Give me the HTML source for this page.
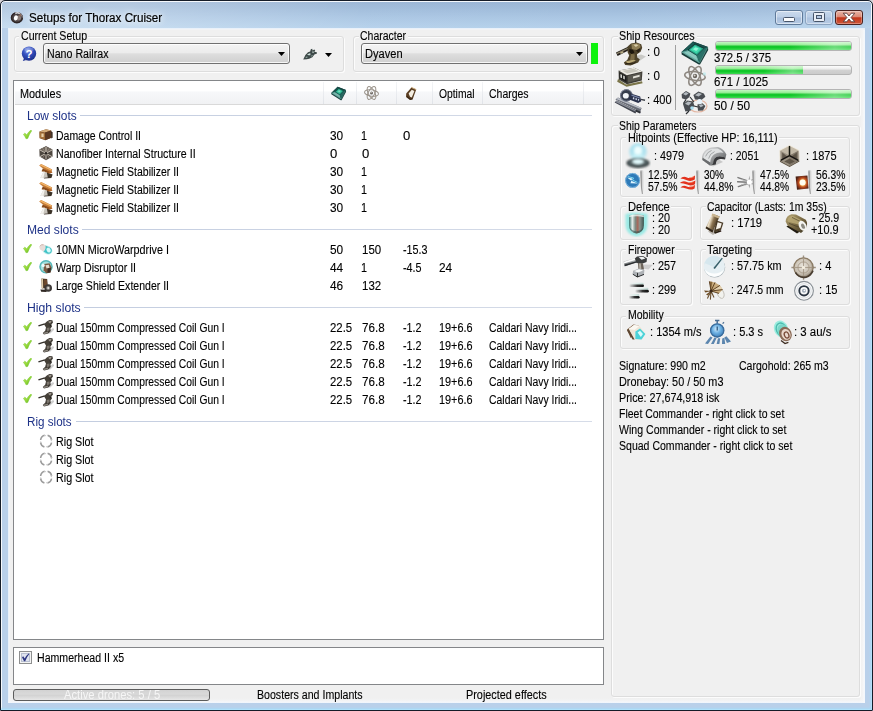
<!DOCTYPE html><html><head><meta charset="utf-8"><title>Setups for Thorax Cruiser</title><style>
html,body{margin:0;padding:0;}
body{width:873px;height:711px;overflow:hidden;background:#d8d4d8;font-family:"Liberation Sans",sans-serif;font-size:12px;line-height:14px;color:#000;position:relative;}
div,span,svg{position:absolute;box-sizing:border-box;}
.t{white-space:pre;transform-origin:0 0;-webkit-text-stroke:0.12px currentColor;}
.win{left:0;top:0;width:873px;height:711px;border:1px solid #151c28;border-radius:5px 5px 1px 1px;background:#b9d0ea;box-shadow:inset 0 0 0 1px rgba(255,255,255,.85);}
.tbar{left:2px;top:2px;width:869px;height:26px;background:linear-gradient(90deg,rgba(255,255,255,.25) 0,rgba(255,255,255,.25) 14%,rgba(255,255,255,.03) 42%,rgba(255,255,255,0) 70%,rgba(255,255,255,.08) 100%),linear-gradient(180deg,#9ab5d5 0,#9fbbda 6px,#aac6e3 15px,#b5d1eb 26px);border-radius:3px 3px 0 0;}
.winb{left:1px;top:707px;width:871px;height:3px;background:linear-gradient(180deg,rgba(160,220,250,0),#a2dcfa);}
.winr{left:869px;top:30px;width:3px;height:680px;background:linear-gradient(90deg,rgba(160,220,250,0),#a6daf8);}
.client{left:8px;top:28px;width:857px;height:675px;background:#f0f0f0;box-shadow:inset 0 0 0 1px #e9f1fa,inset 0 0 0 2px #f2f3f5;}
.gb{border:1px solid #dddddd;border-radius:3px;box-shadow:inset 1px 1px 0 #fcfcfc,1px 1px 0 #fcfcfc;}
.lab{background:#f0f0f0;}
.combo{border:1px solid #707070;border-radius:3px;background:linear-gradient(180deg,#f4f4f4 0,#ececec 45%,#dedede 52%,#cfcfcf 100%);box-shadow:inset 0 0 0 1px rgba(255,255,255,.8);}
.list{border:1px solid #848689;background:#fff;}
.hdr{left:1px;top:1px;height:23px;right:1px;background:linear-gradient(180deg,#fff 0,#fff 42%,#f7f8fa 44%,#f1f2f4 100%);border-bottom:1px solid #d9d9d9;}
.hsep{top:1px;width:1px;height:22px;background:linear-gradient(180deg,#f4f5f7,#e0e3e8);}
.gl{height:1px;background:linear-gradient(90deg,#c3cde0,#d6dce8);}
.pb{border:1px solid #b4b4b4;border-radius:3px;background:linear-gradient(180deg,#fdfdfd 0,#ececec 40%,#d2d2d2 50%,#cbcbcb 100%);overflow:hidden;}
.pf{left:0;top:0;height:100%;background:linear-gradient(90deg,rgba(255,255,255,0) 0,rgba(255,255,255,0) 55%,rgba(255,255,255,.38) 88%,rgba(255,255,255,.25) 100%),linear-gradient(180deg,#c4f6c4 0,#8deb8d 38%,#14c62c 50%,#12c82a 70%,#3edb52 100%);}
</style></head><body>
<svg width="0" height="0" style="left:0;top:0"><defs>
<filter id="b3" x="-20%" y="-20%" width="140%" height="140%"><feGaussianBlur stdDeviation=".35"/></filter>
<filter id="b5" x="-20%" y="-20%" width="140%" height="140%"><feGaussianBlur stdDeviation=".55"/></filter>
<filter id="b8" x="-30%" y="-30%" width="160%" height="160%"><feGaussianBlur stdDeviation=".9"/></filter>
<filter id="b15" x="-40%" y="-40%" width="180%" height="180%"><feGaussianBlur stdDeviation="1.6"/></filter>
<linearGradient id="chk" x1="0" y1="0" x2="1" y2="1"><stop offset="0" stop-color="#bdec62"/><stop offset=".55" stop-color="#92d636"/><stop offset="1" stop-color="#4fa81e"/></linearGradient>
<linearGradient id="gg" x1="0" x2="1"><stop offset="0" stop-color="#8c8c8c"/><stop offset=".45" stop-color="#cfcfcf"/><stop offset="1" stop-color="#f4f4f4"/></linearGradient>
<radialGradient id="hi" cx="42%" cy="28%" r="75%"><stop offset="0" stop-color="#8aa2ec"/><stop offset=".45" stop-color="#3450c0"/><stop offset="1" stop-color="#1b2c86"/></radialGradient>
<radialGradient id="ex" cx="55%" cy="50%" r="55%"><stop offset="0" stop-color="#fffbe0"/><stop offset=".3" stop-color="#ffc860"/><stop offset=".6" stop-color="#b8481c"/><stop offset="1" stop-color="#4a2016"/></radialGradient>
<radialGradient id="sh" cx="50%" cy="40%" r="60%"><stop offset="0" stop-color="#e6fdff"/><stop offset=".55" stop-color="#a9e0ee"/><stop offset="1" stop-color="#a9e0ee" stop-opacity="0"/></radialGradient>
<linearGradient id="df" x1="0" x2="1"><stop offset="0" stop-color="#2f6e68"/><stop offset=".22" stop-color="#e6eeec"/><stop offset=".42" stop-color="#7c8c84"/><stop offset=".58" stop-color="#a8685a"/><stop offset=".72" stop-color="#8a948e"/><stop offset="1" stop-color="#3c5650"/></linearGradient>
<linearGradient id="arm" x1="0" y1="0" x2="1" y2="1"><stop offset="0" stop-color="#e8e8e8"/><stop offset=".5" stop-color="#9a9c9e"/><stop offset="1" stop-color="#4a4c4e"/></linearGradient>
<linearGradient id="slv" x1="0" y1="0" x2="0" y2="1"><stop offset="0" stop-color="#f2f4f4"/><stop offset=".5" stop-color="#9ea2a4"/><stop offset="1" stop-color="#4a4e50"/></linearGradient>
<linearGradient id="brs" x1="0" y1="0" x2="1" y2="1"><stop offset="0" stop-color="#b8a878"/><stop offset=".5" stop-color="#7a6a44"/><stop offset="1" stop-color="#3a3220"/></linearGradient>
<radialGradient id="mt" cx="45%" cy="42%" r="58%"><stop offset="0" stop-color="#e8e3da"/><stop offset=".7" stop-color="#c9c0b2"/><stop offset="1" stop-color="#8e8374"/></radialGradient>
<radialGradient id="sw" cx="45%" cy="40%" r="60%"><stop offset="0" stop-color="#d2ecfc"/><stop offset=".5" stop-color="#6cb0e2"/><stop offset="1" stop-color="#3c7ab4"/></radialGradient>
<linearGradient id="cpu" x1="0" y1="0" x2="1" y2="1"><stop offset="0" stop-color="#2a8f88"/><stop offset=".5" stop-color="#6ee8dc"/><stop offset="1" stop-color="#1f7a74"/></linearGradient>
</defs></svg>
<div class="win"></div><div class="tbar"></div><div class="winb"></div><div class="winr"></div>
<div class="" style="left:775px;top:10px;width:28px;height:15px;border:1px solid #5f7a9a;border-radius:3px;background:linear-gradient(180deg,#cbdaec 0,#bccfe7 48%,#a9bfdc 52%,#b4c9e3 100%);box-shadow:inset 0 0 0 1px rgba(255,255,255,.5);"></div><div class="" style="left:783px;top:17px;width:12px;height:5px;border:1px solid #47556a;border-radius:1.5px;background:#fbfcfe;"></div><div class="" style="left:805px;top:10px;width:28px;height:15px;border:1px solid #8ba3c0;border-radius:3px;background:linear-gradient(180deg,#c4d5ea 0,#b9cde6 48%,#adc3df 52%,#b6cae4 100%);box-shadow:inset 0 0 0 1px rgba(255,255,255,.4);"></div><div class="" style="left:813px;top:12px;width:12px;height:10px;border:1px solid #47556a;border-radius:1.5px;background:#e9eef6;"></div><div class="" style="left:816px;top:15px;width:6px;height:4px;border:1px solid #47556a;background:#b4c8e2;"></div><div class="" style="left:835px;top:10px;width:28px;height:15px;border:1px solid #4a2220;border-radius:3px;background:linear-gradient(180deg,#e9b5a7 0,#dc8a77 45%,#c3361b 52%,#cf573a 100%);box-shadow:inset 0 0 0 1px rgba(255,255,255,.3);"></div><svg class="i" style="left:842px;top:12px" width="14" height="11" viewBox="0 0 14 11"><path d="M1.2 1.2h3.6L7 4l2.2-2.8h3.6L9.1 5.5l3.7 4.3H9.2L7 7 4.8 9.8H1.2l3.7-4.3z" fill="#fff" stroke="#5a3c3c" stroke-width="0.9" stroke-linejoin="round"/></svg>
<svg class="i" style="left:10px;top:9.6px" width="15" height="15" viewBox="0 0 17 17"><g filter="url(#b5)"><ellipse cx="8" cy="8.6" rx="6.6" ry="6" fill="#4a4244"/><ellipse cx="7.8" cy="8.8" rx="6.2" ry="5.6" fill="none" stroke="#2e2628" stroke-width="1.6"/><path d="M9 3.200Q13.600 4 14 8.600" fill="none" stroke="#8a8084" stroke-width="1.300"/><ellipse cx="9.6" cy="9" rx="3" ry="2.8" fill="#8a7c78"/><ellipse cx="6.6" cy="9" rx="2.2" ry="3" fill="#fff" transform="rotate(20 6.6 9)"/><path d="M5.5 3.2q3-2 6 .3l-1 1.2q-2-1.2-4 0z" fill="#d8d8dc"/><circle cx="11.5" cy="6" r="1" fill="#9a6a52"/></g></svg>
<div class="client"></div><div style="left:860px;top:30px;width:5px;height:673px;background:linear-gradient(90deg,rgba(255,255,255,0),rgba(248,250,253,.75))"></div><div style="left:8px;top:698px;width:857px;height:5px;background:linear-gradient(180deg,rgba(255,255,255,0),rgba(246,248,252,.7))"></div>
<div class="gb" style="left:14px;top:36px;width:330px;height:36px;"></div>
<div class="gb" style="left:353px;top:36px;width:251px;height:36px;"></div>
<div class="lab" style="left:19px;top:32px;width:69px;height:10px;"></div>
<div class="lab" style="left:359px;top:32px;width:49px;height:10px;"></div>
<svg class="i" style="left:21px;top:46px" width="16" height="16" viewBox="0 0 16 16"><path d="M3 12.5l-1.2 2.6 3.6-1.2z" fill="#24379a" filter="url(#b3)"/><circle cx="8" cy="7.6" r="7.2" fill="url(#hi)" filter="url(#b3)"/><ellipse cx="8" cy="3.6" rx="4.6" ry="2.4" fill="#fff" opacity=".22"/><text x="8.1" y="12" font-size="11.5" font-weight="bold" fill="#fff" text-anchor="middle" font-family="Liberation Sans, sans-serif">?</text></svg>
<div class="combo" style="left:43px;top:43px;width:247px;height:21px;"></div>
<svg class="i" style="left:278px;top:52px" width="7" height="4" viewBox="0 0 7 4"><path d="M0 0H7 L3.5 4 Z" fill="#000"/></svg>
<svg class="i" style="left:302px;top:46px" width="17" height="16" viewBox="0 0 17 16"><g filter="url(#b3)"><path d="M1.2 13.6L3.4 9 6 6.2l2.2-.8.6-2.2 1.4-.4.4 1.6 1.6-.8 1 .6-.8 1.6 2.4.4.2 1.2-2.6 1.2-2 2.6-3.2 1.6-2.4.4z" fill="#3e4a48"/><path d="M5 8.4l2.6-1.2 1.4.8-1.8 1.6z" fill="#cfe0dc"/><path d="M10 5.6l1.6-.2.6 1-1.6.6z" fill="#b8c8c4"/><path d="M3.4 11l1.8-.6.6.8-1.8.8z" fill="#9ab0aa"/><path d="M8.4 9.8l2-.8.8.8-2 1z" fill="#7a8c88"/></g></svg>
<svg class="i" style="left:325px;top:53px" width="7" height="4" viewBox="0 0 7 4"><path d="M0 0H7 L3.5 4 Z" fill="#000"/></svg>
<div class="combo" style="left:361px;top:43px;width:227px;height:21px;"></div>
<svg class="i" style="left:576px;top:52px" width="7" height="4" viewBox="0 0 7 4"><path d="M0 0H7 L3.5 4 Z" fill="#000"/></svg>
<div class="" style="left:591px;top:43px;width:7px;height:21px;background:linear-gradient(90deg,#22d822 0,#0af40a 1.5px,#0af40a 100%);"></div>
<div class="list" style="left:13px;top:80px;width:591px;height:560px;"><div class="hdr"></div><div class="hsep" style="left:309px"></div><div class="hsep" style="left:342px"></div><div class="hsep" style="left:382px"></div><div class="hsep" style="left:418px"></div><div class="hsep" style="left:468px"></div><div class="hsep" style="left:569px"></div></div>
<svg class="i" style="left:331px;top:86px" width="15.5" height="15" viewBox="0 0 15.5 15"><g transform="scale(0.553571 0.576923)"><g filter="url(#b5)"><path d="M.5 12L12 1.500 27 7 27.200 10 19 24.600 17.800 24.600 .700 14.400z" fill="#143a38"/><path d="M.5 12L12 1.500 14 4 7 10z" fill="#1d5a54"/><path d="M12 1.500L27 7 23 8.400 14 4z" fill="#1a4c48"/><path d="M.5 12L7 10 16 15.400 18.500 23z" fill="#5aa69c"/><path d="M18.500 23L16 15.400 23 8.400 27 7z" fill="#2c7068"/><path d="M3 12.400L7.600 11 15 15.600 16.600 20.400z" fill="#9fd8cf" opacity=".7"/><path d="M7 10L14 4 23 8.400 16 15.400z" fill="#27a588"/><path d="M9.400 9.800L14.200 5.800 20.400 8.800 15.600 13.400z" fill="#3fd9ac"/><path d="M12 9.200l2.600-2 3 1.400-2.400 2.400z" fill="#8ff6d6"/><path d="M7 10L14 4 23 8.400" fill="none" stroke="#0f3330" stroke-width=".9"/><path d="M7 10l9 5.400 7-7" fill="none" stroke="#164440" stroke-width=".7"/><path d="M.5 12l18 11L27 7" fill="none" stroke="#b8e8e0" stroke-width=".5" opacity=".55"/><path d="M.5 12L12 1.500 27 7 27.200 10 19 24.600 17.800 24.600 .700 14.400z" fill="#062a28" opacity="0.12"/></g></g></svg><svg class="i" style="left:364px;top:85px" width="15" height="16" viewBox="0 0 15 16"><g filter="url(#b3)"><g fill="none" stroke="#9a938a" stroke-width="1"><ellipse cx="7.5" cy="8" rx="7.05" ry="3.2" transform="rotate(62 7.5 8)"/><ellipse cx="7.5" cy="8" rx="7.05" ry="3.2" transform="rotate(-62 7.5 8)"/><ellipse cx="7.5" cy="8" rx="7.05" ry="3.2" transform="rotate(8 7.5 8)"/></g><circle cx="7.5" cy="8" r="1.5" fill="#6a645e"/><circle cx="7.1" cy="7.6" r="0.675" fill="#d8d4ce"/></g></svg><svg class="i" style="left:404px;top:86px" width="14" height="15" viewBox="0 0 14 15"><g filter="url(#b3)"><path d="M2.2 7.6L7.4 1.4l4.8 2.2-3.6 9.8-2.6.6-4-3z" fill="#5a3e22"/><path d="M4.6 7.4l3.2-3.6 2.6 1.2-2.6 6.4-1.8-.6z" fill="#f4eee2"/><path d="M3 10.6l3 2.6 2.4-.4" fill="none" stroke="#2a1c10" stroke-width="1"/><path d="M7.4 1.4l4.8 2.2" stroke="#c8a878" stroke-width="1"/></g></svg>
<div class="gl" style="left:80px;top:115px;width:512px"></div>
<div class="gl" style="left:82px;top:229px;width:510px"></div>
<div class="gl" style="left:84px;top:307px;width:508px"></div>
<div class="gl" style="left:76px;top:421px;width:516px"></div>
<svg class="i" style="left:23px;top:130.3px" width="9.2" height="9.4" viewBox="0 0 10 10"><path d="M.5 4.700L2 3.300Q3.300 4.200 4 5.200Q5.800 2.200 8.500 0L9.500.700Q6.600 4.600 5.100 9.100L3.300 9.400Q2.200 6.600.5 4.700z" fill="url(#chk)" stroke="#7cc83a" stroke-width=".6" stroke-linejoin="round" filter="url(#b3)"/></svg>
<svg class="i" style="left:38px;top:127px" width="16" height="16" viewBox="0 0 16 16"><g filter="url(#b3)"><path d="M1.4 4.4L8 2.2l5.2 1.2.2 7.4-6.2 2.4-5.6-2z" fill="#7a4e2a"/><path d="M1.4 4.4L8 2.2l5.2 1.2L7 5.4z" fill="#d2aa78"/><path d="M7 5.4l6.2-2 .2 7.4-6.2 2.4z" fill="#5a3820"/><path d="M1.6 5l5.2 1.2v6.4l-5.2-1.8z" fill="#a8743e"/><rect x="3.4" y="6.6" width="2.2" height="3.4" fill="#e8d0a8"/><path d="M13 4.2l1.6 1v5.6l-1.4.6z" fill="#3a2a20"/></g></svg>
<svg class="i" style="left:38px;top:145px" width="16" height="16" viewBox="0 0 16 16"><g filter="url(#b3)"><path d="M8 1.2l6.4 3.4.2 7L8 15.2 1.6 11.6l-.2-7z" fill="#4e4640"/><path d="M8 1.2l6.4 3.4L8 8 1.4 4.6z" fill="#6e655c"/><path d="M8 2v12.4M2 5l12 6.6M14 5L2 11.6" stroke="#d4ccc0" stroke-width=".9"/><path d="M4.6 3.4l6.8 9.6M11.4 3.4L4.6 13" stroke="#a89e90" stroke-width=".6"/><circle cx="8" cy="8.2" r="1.3" fill="#2a2622"/></g></svg>
<svg class="i" style="left:38px;top:163px" width="16" height="16" viewBox="0 0 16 16"><g filter="url(#b3)"><path d="M9 9.4l5.6 2.2-1.2 3.4-7.6.4z" fill="#3a3028"/><path d="M1.2 2.4l2-1.4 11 5.6-1 2.6-3.2.2z" fill="#c47a34"/><path d="M1.6 2.2l1.6-1 10.6 5.4-.8.8z" fill="#f0b46a"/><path d="M4.8 5.4l7 3.4-.8 1.8-7.4-2.4z" fill="#8a4c1c"/><path d="M5.6 8.4l3.2 1.2 1 5-7.4.4z" fill="#c8c4bc"/><path d="M5.6 8.4l1.2.4-1.4 6-3 .2z" fill="#f4f2ee"/><path d="M10.4 8.8l3.4-.6.6 1.6-3.4.8z" fill="#b06428"/></g></svg>
<svg class="i" style="left:38px;top:181px" width="16" height="16" viewBox="0 0 16 16"><g filter="url(#b3)"><path d="M9 9.4l5.6 2.2-1.2 3.4-7.6.4z" fill="#3a3028"/><path d="M1.2 2.4l2-1.4 11 5.6-1 2.6-3.2.2z" fill="#c47a34"/><path d="M1.6 2.2l1.6-1 10.6 5.4-.8.8z" fill="#f0b46a"/><path d="M4.8 5.4l7 3.4-.8 1.8-7.4-2.4z" fill="#8a4c1c"/><path d="M5.6 8.4l3.2 1.2 1 5-7.4.4z" fill="#c8c4bc"/><path d="M5.6 8.4l1.2.4-1.4 6-3 .2z" fill="#f4f2ee"/><path d="M10.4 8.8l3.4-.6.6 1.6-3.4.8z" fill="#b06428"/></g></svg>
<svg class="i" style="left:38px;top:199px" width="16" height="16" viewBox="0 0 16 16"><g filter="url(#b3)"><path d="M9 9.4l5.6 2.2-1.2 3.4-7.6.4z" fill="#3a3028"/><path d="M1.2 2.4l2-1.4 11 5.6-1 2.6-3.2.2z" fill="#c47a34"/><path d="M1.6 2.2l1.6-1 10.6 5.4-.8.8z" fill="#f0b46a"/><path d="M4.8 5.4l7 3.4-.8 1.8-7.4-2.4z" fill="#8a4c1c"/><path d="M5.6 8.4l3.2 1.2 1 5-7.4.4z" fill="#c8c4bc"/><path d="M5.6 8.4l1.2.4-1.4 6-3 .2z" fill="#f4f2ee"/><path d="M10.4 8.8l3.4-.6.6 1.6-3.4.8z" fill="#b06428"/></g></svg>
<svg class="i" style="left:23px;top:244.3px" width="9.2" height="9.4" viewBox="0 0 10 10"><path d="M.5 4.700L2 3.300Q3.300 4.200 4 5.200Q5.800 2.200 8.500 0L9.500.700Q6.600 4.600 5.100 9.100L3.300 9.400Q2.200 6.600.5 4.700z" fill="url(#chk)" stroke="#7cc83a" stroke-width=".6" stroke-linejoin="round" filter="url(#b3)"/></svg>
<svg class="i" style="left:38px;top:241px" width="16" height="16" viewBox="0 0 16 16"><g filter="url(#b5)"><ellipse cx="9.2" cy="9" rx="5.4" ry="4.2" fill="#9fe8ea" opacity=".7" transform="rotate(28 9.2 9)"/><path d="M1.6 5.2Q3 2.400 6 3.600l6.6 3.400Q14.800 9 13.200 11.400 11.400 13.400 9 12.400L2.400 8.800Q.8 7 1.600 5.200z" fill="#e8dcd8"/><path d="M7.400 4.400l5.200 2.600Q14.800 9 13.200 11.400 11.400 13.400 9 12.400L5.600 10.600Q8.400 8 7.400 4.400z" fill="#3fc4c8"/><ellipse cx="10.600" cy="9" rx="2" ry="2.600" fill="#d6fbfb" transform="rotate(-30 10.6 9)"/><path d="M2 5.200Q3 3 5.600 3.800" fill="none" stroke="#c8a8a0" stroke-width=".8"/></g></svg>
<svg class="i" style="left:23px;top:262.3px" width="9.2" height="9.4" viewBox="0 0 10 10"><path d="M.5 4.700L2 3.300Q3.300 4.200 4 5.200Q5.800 2.200 8.500 0L9.500.700Q6.600 4.600 5.100 9.100L3.300 9.400Q2.200 6.600.5 4.700z" fill="url(#chk)" stroke="#7cc83a" stroke-width=".6" stroke-linejoin="round" filter="url(#b3)"/></svg>
<svg class="i" style="left:38px;top:259px" width="16" height="16" viewBox="0 0 16 16"><g filter="url(#b5)"><circle cx="8" cy="7.800" r="6.400" fill="#a6e2e0"/><circle cx="8" cy="7.800" r="6" fill="none" stroke="#58b8ba" stroke-width="1.400"/><path d="M6 5l5.600-.8 2 4.400-1 5-4.400.6-2.600-3z" fill="#7a5a42"/><path d="M7.400 6.200l3.400-.4.800 3-3 .8z" fill="#e6dcd0"/><path d="M9.600 9.400l3.400-.6-.6 4.600-3 .4z" fill="#3a2c24"/><circle cx="5.200" cy="6.400" r="1.600" fill="#eefcfc"/></g></svg>
<svg class="i" style="left:38px;top:277px" width="16" height="16" viewBox="0 0 16 16"><g filter="url(#b3)"><path d="M3.400 1.600l5.800.4.600 8.800-6 .6z" fill="#4a3424"/><path d="M3.400 1.600l1.600.1.200 9.600-1.400.1z" fill="#e0cca8"/><path d="M6 2.600l3 .2.400 5.600-3.200.2z" fill="#6e4a2e"/><circle cx="10.200" cy="11" r="3.800" fill="#3c3836"/><circle cx="10.200" cy="11" r="2" fill="#8a8682"/><circle cx="10.200" cy="11" r=".9" fill="#e8e4e0"/><path d="M2.400 12.400l5 .4 1.400 2.200-5.600-.2z" fill="#2e2620"/></g></svg>
<svg class="i" style="left:23px;top:322.3px" width="9.2" height="9.4" viewBox="0 0 10 10"><path d="M.5 4.700L2 3.300Q3.300 4.200 4 5.200Q5.800 2.200 8.500 0L9.500.700Q6.600 4.600 5.100 9.100L3.300 9.400Q2.200 6.600.5 4.700z" fill="url(#chk)" stroke="#7cc83a" stroke-width=".6" stroke-linejoin="round" filter="url(#b3)"/></svg>
<svg class="i" style="left:38px;top:319px" width="16" height="16" viewBox="0 0 16 16"><g filter="url(#b5)"><path d="M10 12.400l5-3.400 1.400 1.600-4.600 4.400z" fill="#a8a8a8" opacity=".55"/><path d="M.2 6.200L6.600 4.300l.5 1.100L.7 7.600z" fill="#34302c"/><path d="M6 5.200L8.800 2.600 11.400 1 14.400 1.200 15 3.400 13.400 5.600 14 7.600 12.400 9.400 12.800 12 10.400 14.400 6 15.400 4.800 14 7.200 11.800 8 8.600z" fill="#443f39"/><path d="M10 2.800l2.400-.9 1.300.4-1.600 2.300z" fill="#a29c92"/><path d="M8.600 9l2.800-.6.200 2.600-2.400 1.400z" fill="#7b766e"/><path d="M5.600 13.800l4-1 .4 1.200-3.800 1z" fill="#938e85"/><path d="M11.400 5.200l1.600 1-.6 1.600z" fill="#1e1b18"/></g></svg>
<svg class="i" style="left:23px;top:340.3px" width="9.2" height="9.4" viewBox="0 0 10 10"><path d="M.5 4.700L2 3.300Q3.300 4.200 4 5.200Q5.800 2.200 8.500 0L9.500.700Q6.600 4.600 5.100 9.100L3.300 9.400Q2.200 6.600.5 4.700z" fill="url(#chk)" stroke="#7cc83a" stroke-width=".6" stroke-linejoin="round" filter="url(#b3)"/></svg>
<svg class="i" style="left:38px;top:337px" width="16" height="16" viewBox="0 0 16 16"><g filter="url(#b5)"><path d="M10 12.400l5-3.400 1.400 1.600-4.600 4.400z" fill="#a8a8a8" opacity=".55"/><path d="M.2 6.200L6.600 4.300l.5 1.100L.7 7.600z" fill="#34302c"/><path d="M6 5.200L8.800 2.600 11.400 1 14.400 1.200 15 3.400 13.400 5.600 14 7.600 12.400 9.400 12.800 12 10.400 14.400 6 15.400 4.800 14 7.200 11.800 8 8.600z" fill="#443f39"/><path d="M10 2.800l2.400-.9 1.300.4-1.600 2.300z" fill="#a29c92"/><path d="M8.600 9l2.800-.6.200 2.600-2.400 1.400z" fill="#7b766e"/><path d="M5.600 13.800l4-1 .4 1.200-3.800 1z" fill="#938e85"/><path d="M11.400 5.200l1.600 1-.6 1.600z" fill="#1e1b18"/></g></svg>
<svg class="i" style="left:23px;top:358.3px" width="9.2" height="9.4" viewBox="0 0 10 10"><path d="M.5 4.700L2 3.300Q3.300 4.200 4 5.200Q5.800 2.200 8.500 0L9.500.700Q6.600 4.600 5.100 9.100L3.300 9.400Q2.200 6.600.5 4.700z" fill="url(#chk)" stroke="#7cc83a" stroke-width=".6" stroke-linejoin="round" filter="url(#b3)"/></svg>
<svg class="i" style="left:38px;top:355px" width="16" height="16" viewBox="0 0 16 16"><g filter="url(#b5)"><path d="M10 12.400l5-3.400 1.400 1.600-4.600 4.400z" fill="#a8a8a8" opacity=".55"/><path d="M.2 6.200L6.600 4.300l.5 1.100L.7 7.600z" fill="#34302c"/><path d="M6 5.200L8.800 2.600 11.400 1 14.400 1.200 15 3.400 13.400 5.600 14 7.600 12.400 9.400 12.800 12 10.400 14.400 6 15.400 4.800 14 7.200 11.800 8 8.600z" fill="#443f39"/><path d="M10 2.800l2.400-.9 1.300.4-1.600 2.300z" fill="#a29c92"/><path d="M8.600 9l2.800-.6.200 2.600-2.400 1.400z" fill="#7b766e"/><path d="M5.600 13.800l4-1 .4 1.200-3.800 1z" fill="#938e85"/><path d="M11.400 5.200l1.600 1-.6 1.600z" fill="#1e1b18"/></g></svg>
<svg class="i" style="left:23px;top:376.3px" width="9.2" height="9.4" viewBox="0 0 10 10"><path d="M.5 4.700L2 3.300Q3.300 4.200 4 5.200Q5.800 2.200 8.500 0L9.500.700Q6.600 4.600 5.100 9.100L3.300 9.400Q2.200 6.600.5 4.700z" fill="url(#chk)" stroke="#7cc83a" stroke-width=".6" stroke-linejoin="round" filter="url(#b3)"/></svg>
<svg class="i" style="left:38px;top:373px" width="16" height="16" viewBox="0 0 16 16"><g filter="url(#b5)"><path d="M10 12.400l5-3.400 1.400 1.600-4.600 4.400z" fill="#a8a8a8" opacity=".55"/><path d="M.2 6.200L6.600 4.300l.5 1.100L.7 7.600z" fill="#34302c"/><path d="M6 5.200L8.800 2.600 11.400 1 14.400 1.200 15 3.400 13.400 5.600 14 7.600 12.400 9.400 12.800 12 10.400 14.400 6 15.400 4.800 14 7.200 11.800 8 8.600z" fill="#443f39"/><path d="M10 2.800l2.400-.9 1.300.4-1.600 2.300z" fill="#a29c92"/><path d="M8.600 9l2.800-.6.200 2.600-2.400 1.400z" fill="#7b766e"/><path d="M5.600 13.800l4-1 .4 1.200-3.800 1z" fill="#938e85"/><path d="M11.400 5.200l1.600 1-.6 1.600z" fill="#1e1b18"/></g></svg>
<svg class="i" style="left:23px;top:394.3px" width="9.2" height="9.4" viewBox="0 0 10 10"><path d="M.5 4.700L2 3.300Q3.300 4.200 4 5.200Q5.800 2.200 8.500 0L9.500.700Q6.600 4.600 5.100 9.100L3.300 9.400Q2.200 6.600.5 4.700z" fill="url(#chk)" stroke="#7cc83a" stroke-width=".6" stroke-linejoin="round" filter="url(#b3)"/></svg>
<svg class="i" style="left:38px;top:391px" width="16" height="16" viewBox="0 0 16 16"><g filter="url(#b5)"><path d="M10 12.400l5-3.400 1.400 1.600-4.600 4.400z" fill="#a8a8a8" opacity=".55"/><path d="M.2 6.200L6.600 4.300l.5 1.100L.7 7.600z" fill="#34302c"/><path d="M6 5.200L8.800 2.600 11.400 1 14.400 1.200 15 3.400 13.400 5.600 14 7.600 12.400 9.400 12.800 12 10.400 14.400 6 15.400 4.800 14 7.200 11.800 8 8.600z" fill="#443f39"/><path d="M10 2.800l2.400-.9 1.300.4-1.600 2.300z" fill="#a29c92"/><path d="M8.600 9l2.800-.6.200 2.600-2.400 1.400z" fill="#7b766e"/><path d="M5.600 13.800l4-1 .4 1.200-3.800 1z" fill="#938e85"/><path d="M11.400 5.200l1.600 1-.6 1.600z" fill="#1e1b18"/></g></svg>
<svg class="i" style="left:38px;top:433px" width="16" height="16" viewBox="0 0 16 16"><g filter="url(#b3)" fill="none" stroke="#9c9c9c" stroke-width="1.5"><path d="M2.600 7a5.600 5.600 0 0 1 4-4.800"/><path d="M9.600 2.200a5.600 5.600 0 0 1 4 4.600"/><path d="M13.600 9.600a5.600 5.600 0 0 1-4 4.400"/><path d="M6.400 14a5.600 5.600 0 0 1-3.800-4.400"/></g><g fill="#c8c8c8"><path d="M6 1.400l2.200.8-1.400 1.600z"/><path d="M14.400 6.200l-.8 2.200-1.400-1.600z"/><path d="M10 14.800l-2.200-.8 1.400-1.600z"/><path d="M1.800 10.200l.8-2.200L4 9.600z"/></g></svg>
<svg class="i" style="left:38px;top:451px" width="16" height="16" viewBox="0 0 16 16"><g filter="url(#b3)" fill="none" stroke="#9c9c9c" stroke-width="1.5"><path d="M2.600 7a5.600 5.600 0 0 1 4-4.800"/><path d="M9.600 2.200a5.600 5.600 0 0 1 4 4.600"/><path d="M13.600 9.600a5.600 5.600 0 0 1-4 4.400"/><path d="M6.400 14a5.600 5.600 0 0 1-3.800-4.400"/></g><g fill="#c8c8c8"><path d="M6 1.400l2.200.8-1.400 1.600z"/><path d="M14.400 6.200l-.8 2.200-1.400-1.600z"/><path d="M10 14.800l-2.200-.8 1.400-1.600z"/><path d="M1.800 10.200l.8-2.200L4 9.600z"/></g></svg>
<svg class="i" style="left:38px;top:469px" width="16" height="16" viewBox="0 0 16 16"><g filter="url(#b3)" fill="none" stroke="#9c9c9c" stroke-width="1.5"><path d="M2.600 7a5.600 5.600 0 0 1 4-4.800"/><path d="M9.600 2.200a5.600 5.600 0 0 1 4 4.600"/><path d="M13.600 9.600a5.600 5.600 0 0 1-4 4.400"/><path d="M6.400 14a5.600 5.600 0 0 1-3.800-4.400"/></g><g fill="#c8c8c8"><path d="M6 1.400l2.200.8-1.400 1.600z"/><path d="M14.400 6.200l-.8 2.200-1.400-1.600z"/><path d="M10 14.800l-2.200-.8 1.400-1.600z"/><path d="M1.800 10.200l.8-2.200L4 9.600z"/></g></svg>
<div class="list" style="left:13px;top:647px;width:591px;height:38px;"></div>
<svg class="i" style="left:19px;top:651px" width="13" height="13" viewBox="0 0 13 13"><rect x=".5" y=".5" width="12" height="12" fill="#f4f4f4" stroke="#8e8f8f"/><rect x="2.5" y="2.5" width="8" height="8" fill="#dfe3ee" stroke="#b8bfd0"/><path d="M3 6.2l1.2-.9 1.5 2.2Q7.4 4.2 9.6 2.4l.7.7Q8 5.8 6.2 10.2H5z" fill="#2c3580"/></svg>
<div class="" style="left:13px;top:689px;width:197px;height:12px;border:1px solid #5c5c5c;border-radius:3px;background:linear-gradient(180deg,#d2d2d2 0,#d9d9d9 40%,#d3d3d3 55%,#e6e6e6 100%);"></div>
<div class="gb" style="left:611px;top:36px;width:249px;height:80px;"></div>
<div class="lab" style="left:617.5px;top:32px;width:79px;height:10px;"></div>
<div class="gb" style="left:611px;top:125px;width:249px;height:572px;"></div>
<div class="lab" style="left:617.5px;top:122px;width:81px;height:10px;"></div>
<div class="gb" style="left:620px;top:137px;width:230px;height:60px;"></div>
<div class="lab" style="left:626px;top:134px;width:153px;height:9px;"></div>
<div class="gb" style="left:620px;top:206px;width:72px;height:34px;"></div>
<div class="lab" style="left:626px;top:203px;width:45px;height:9px;"></div>
<div class="gb" style="left:700px;top:206px;width:150px;height:34px;"></div>
<div class="lab" style="left:705.5px;top:203px;width:123px;height:9px;"></div>
<div class="gb" style="left:620px;top:249px;width:72px;height:56px;"></div>
<div class="lab" style="left:626px;top:246px;width:50px;height:9px;"></div>
<div class="gb" style="left:700px;top:249px;width:150px;height:56px;"></div>
<div class="lab" style="left:705.5px;top:246px;width:49px;height:9px;"></div>
<div class="gb" style="left:620px;top:316px;width:230px;height:33px;"></div>
<div class="lab" style="left:626px;top:312px;width:39px;height:9px;"></div>
<div class="" style="left:675px;top:45px;width:1px;height:65px;background:#a0a0a0;"></div>
<div class="pb" style="left:715px;top:41px;width:137px;height:10px;"><div class="pf" style="width:100%"></div></div>
<div class="pb" style="left:715px;top:65px;width:137px;height:10px;"><div class="pf" style="width:64.5%"></div></div>
<div class="pb" style="left:715px;top:89px;width:137px;height:10px;"><div class="pf" style="width:100%"></div></div>
<svg class="i" style="left:615px;top:42px" width="31" height="25" viewBox="0 0 31 25"><g filter="url(#b5)"><path d="M17 15.400l9-3 5 2-8 5.600-8 1z" fill="#b8b8b4" opacity=".7"/><path d="M1 10.600L13.600 4.600l1.600 3L2.600 14z" fill="#221f1a"/><path d="M1.600 11L13.400 5.400l.5 1L2.200 12.200z" fill="#8a8068"/><path d="M5 10.400l3-1.400.8 1.600-3 1.400z" fill="#b4a884"/><path d="M12.600 4.400l3.400-3 5.600-1 4.600 1.800 1 3.600-1.600 4-3.600 2.400.2 3.400 2.600 1.600-1.600 3.400-7.600 2.800-5.400-.4-1.400-2.400 3.400-2.600 2-4.400-1.600-3.400z" fill="#4e422a"/><path d="M16.400 2.200l5-1 3.600 1.400.6 2.600-3.600 2.800-5-.8z" fill="#8e7e56"/><path d="M18.400 2.800l3-.6 2 1-2.600 1.800z" fill="#d8ccA6"/><path d="M14.400 7l3.600.8 1.400 3-2.800 1.200-2.400-2z" fill="#1c160c"/><path d="M21 8.400l3.600-1.800.8 1-2 3.200z" fill="#2a2214"/><path d="M16 12l3.600.2 0 4.600-4.600 2z" fill="#7c6c46"/><path d="M10.400 19.600l8.600-2.200 1.800 1.400-7.800 2.800z" fill="#b8a876"/><path d="M10.600 21.400l7.400.4 3-2" fill="none" stroke="#2a2214" stroke-width=".9"/></g></svg><svg class="i" style="left:616px;top:67px" width="29" height="20" viewBox="0 0 29 20"><g filter="url(#b5)"><path d="M2 12l8 5.600 16-3.400.6 2-16 3.600-9.400-5z" fill="#7a7448"/><path d="M2.600 3.600L18 .8l8.400 3.800-.6 8.800-15 3.800-8-4.800z" fill="#3e3c36"/><path d="M2.600 3.600L18 .8l8.400 3.800-15.600 3.600z" fill="#eceae2"/><path d="M6.400 3.800L17.600 1.800l5.200 2.400-11.600 2.400z" fill="#c8c6bc"/><path d="M3.400 5.400l7 3.600.2 6.400-7-4.200z" fill="#1e1e1c"/><path d="M4.400 7l1.600.8v3.400l-1.600-.8zM7.200 8.400l1.600.8v3.400l-1.600-.8z" fill="#d8d8d0"/><path d="M12 9l13.400-3.200-.4 6.400L12 15.400z" fill="#5a5850"/><path d="M17 9.400l6.600-1.600v2l-6.600 1.800z" fill="#e4e2d8"/></g></svg><svg class="i" style="left:614px;top:88px" width="32" height="26" viewBox="0 0 32 26"><g filter="url(#b5)"><path d="M1.400 11.400L4 9.600 27.600 20l-1.400 3.800z" fill="#686c76"/><path d="M2 11L4 9.800l23 10-.5 1.300z" fill="#b9bdc6"/><path d="M.6 14.400l2-2L23 22.600l-1.600 3z" fill="#41444e"/><path d="M1.400 14L2.800 12.800 22.400 22.800l-.5 1z" fill="#8a8e98"/><path d="M22 21.400l5 2.400-1 1.600-4.600-2z" fill="#2e3038"/><circle cx="12.400" cy="7.400" r="6.200" fill="#363c4c"/><circle cx="12.400" cy="7.400" r="5.800" fill="none" stroke="#7c8496" stroke-width="1"/><ellipse cx="11.800" cy="7.800" rx="3" ry="2.800" fill="#f2f5f8"/><path d="M16.800 5.600l9.400 3 1 4.600-3 1.800-9.600-3.800z" fill="#29304c"/><path d="M17.600 6.600l8 2.600.2 1.200-8.400-2.600z" fill="#7a86a8"/><path d="M19 9.200l1.400.4-.2 1.800-1.400-.4zM21.600 10l1.400.4-.2 1.800-1.400-.4zM24 10.800l1.200.4-.2 1.600-1.200-.4z" fill="#cfd7e6"/><path d="M26.600 11.400l4.400.8" stroke="#3a3c44" stroke-width="1.400"/></g></svg><svg class="i" style="left:681px;top:40px" width="28" height="26" viewBox="0 0 28 26"><g transform="scale(1 1)"><g filter="url(#b5)"><path d="M.5 12L12 1.500 27 7 27.200 10 19 24.600 17.800 24.600 .700 14.400z" fill="#143a38"/><path d="M.5 12L12 1.500 14 4 7 10z" fill="#1d5a54"/><path d="M12 1.500L27 7 23 8.400 14 4z" fill="#1a4c48"/><path d="M.5 12L7 10 16 15.400 18.500 23z" fill="#5aa69c"/><path d="M18.500 23L16 15.400 23 8.400 27 7z" fill="#2c7068"/><path d="M3 12.400L7.600 11 15 15.600 16.600 20.400z" fill="#9fd8cf" opacity=".7"/><path d="M7 10L14 4 23 8.400 16 15.400z" fill="#27a588"/><path d="M9.400 9.800L14.200 5.800 20.400 8.800 15.600 13.400z" fill="#3fd9ac"/><path d="M12 9.200l2.600-2 3 1.400-2.400 2.400z" fill="#8ff6d6"/><path d="M7 10L14 4 23 8.400" fill="none" stroke="#0f3330" stroke-width=".9"/><path d="M7 10l9 5.400 7-7" fill="none" stroke="#164440" stroke-width=".7"/><path d="M.5 12l18 11L27 7" fill="none" stroke="#b8e8e0" stroke-width=".5" opacity=".55"/><path d="M.5 12L12 1.500 27 7 27.200 10 19 24.600 17.800 24.600 .700 14.400z" fill="#062a28" opacity="0"/></g></g></svg><svg class="i" style="left:684px;top:65px" width="22" height="22" viewBox="0 0 22 22"><g filter="url(#b3)"><g fill="none" stroke="#8d8780" stroke-width="1.5"><ellipse cx="11" cy="11" rx="10.34" ry="4.4" transform="rotate(62 11 11)"/><ellipse cx="11" cy="11" rx="10.34" ry="4.4" transform="rotate(-62 11 11)"/><ellipse cx="11" cy="11" rx="10.34" ry="4.4" transform="rotate(8 11 11)"/></g><circle cx="11" cy="11" r="2.2" fill="#6a645e"/><circle cx="10.6" cy="10.6" r="0.99" fill="#d8d4ce"/></g><circle cx="20.500" cy="9" r="1.800" fill="#bfeef0" opacity=".7" filter="url(#b5)"/></svg><svg class="i" style="left:680px;top:89px" width="29" height="26" viewBox="0 0 29 26"><g filter="url(#b5)"><ellipse cx="18" cy="17" rx="9" ry="6" fill="none" stroke="#e0a890" stroke-width="1.200" opacity=".8"/><g fill="#4a4e52"><path d="M1.600 5.200L6 2l4.400 2.400-1 3.600-3.400 2.800-4-1.600z"/><path d="M13.400 6l5-3.400 5.400 1.800 1.600 3.400-4 3.200-6.400-.4z"/><path d="M3 15l4.400-3.600 5.600 1 1.400 4.400-4 5-5 .6z"/><path d="M17.400 15.600l5-1.400 3 2.800-2.400 4.400-5 .4z"/></g><g fill="#b4bac0"><path d="M3 5l3-2 2.600 1.400-2.800 2z"/><path d="M15 6.200l3.600-2.400 3.400 1.200-3.400 2.600z"/><path d="M5 14.800l3-2.200 3.600.8-3 3z"/><path d="M18.800 16l3.200-.8 1.600 1.600-3 1.400z"/></g><path d="M6 10.600l-2.600 4M10 8l4 5M20 11l-1 4M9 22l-3 3M14 17l4 1" stroke="#2e3236" stroke-width="1.200"/><circle cx="19.600" cy="12.600" r="2.600" fill="#e8f2fa"/><circle cx="12" cy="19" r="1.800" fill="#a8dcf0"/></g></svg>
<svg class="i" style="left:625px;top:142px" width="26" height="27" viewBox="0 0 26 27"><g filter="url(#b8)"><ellipse cx="13" cy="10.500" rx="9.500" ry="9.500" fill="url(#sh)"/><path d="M7 18Q8 8 13 6 18 8 19 18z" fill="#c9f2f8" opacity=".8"/><ellipse cx="13" cy="21" rx="11.600" ry="5" fill="#2e383a"/><ellipse cx="13" cy="20.400" rx="9.800" ry="3.800" fill="#566466"/><ellipse cx="13" cy="19.600" rx="5.600" ry="2.400" fill="#e4fcff"/><ellipse cx="13" cy="8.600" rx="3.600" ry="4" fill="#f4ffff" opacity=".85"/></g></svg><svg class="i" style="left:700px;top:145px" width="28" height="23" viewBox="0 0 28 23"><g filter="url(#b5)"><path d="M5 17l8 4.600 10-4.600-8-5z" fill="#a0a0a0" opacity=".5"/><path d="M2 12Q3.400 4.600 11 2.600L18 2Q23.600 3.600 26.400 9.600L25.600 12.400 21.600 11.400Q17 10.400 14.600 13.400 13 15.600 13 19L10 20.400 2.400 15z" fill="url(#arm)"/><path d="M3.400 11.600Q5 5.400 11.600 3.800L17.600 3.400Q21.400 4.600 23.600 7.800 18 6.600 14 9.400 10.600 12 10.200 17.400L3.600 13.400z" fill="#dfe1e2"/><path d="M5.600 11.400Q7 7 11.600 5.400M8.600 13.600Q9.600 8.600 14.600 6.600" fill="none" stroke="#8a8c8e" stroke-width=".7"/><path d="M13 19Q13 15.600 14.600 13.400 17 10.400 21.600 11.400L25.600 12.400 25 14.600 21.400 14Q18.400 13.600 16.800 15.600 15.800 17 15.800 19.400L10 20.400z" fill="#37393b"/><path d="M2.400 15L10 20.400 10.200 17.400 2.600 12.800z" fill="#6a6c6e"/></g></svg><svg class="i" style="left:778px;top:144px" width="23" height="24" viewBox="0 0 23 24"><g filter="url(#b5)"><path d="M11.500 1.400L21 6.400l.2 10.600L11.600 22.400 2 17.200 1.800 6.400z" fill="#9a9080"/><path d="M11.500 1.400L21 6.400 11.500 11.600 1.800 6.400z" fill="#c2b8a6"/><path d="M11.500 11.600L21 6.400l.2 10.600-9.600 5.400z" fill="#83786a"/><path d="M4.200 8.600v6.800l5-2.900zM18.800 8.600v6.800l-5-2.900zM6.200 17.400l5.300-3 5.300 3-5.300 2.700z" fill="#4a4136" opacity=".7"/><path d="M11.500 11.600V2M11.500 11.600l9.300 5M11.500 11.600l-9.300 5" stroke="#17130f" stroke-width="1.500"/><path d="M11.500 1.400L21 6.400l.2 10.600L11.600 22.400 2 17.200 1.800 6.400z" fill="none" stroke="#f1eadc" stroke-width="1" opacity=".9"/><path d="M2 17.200l9.600 5.200 9.600-5.400" fill="none" stroke="#62584a" stroke-width="1.100"/></g></svg><svg class="i" style="left:624px;top:172px" width="17" height="17" viewBox="0 0 17 17"><g filter="url(#b5)"><circle cx="8.600" cy="8.400" r="7.400" fill="#2f7ab8"/><circle cx="8.600" cy="8.400" r="7" fill="none" stroke="#8cc0e4" stroke-width=".8"/><path d="M3 5.400l5.400 1.200-1.200 2.200 6.600 2.800-7.400-.4 1-2.400z" fill="#dff6ff"/><path d="M4 4.600l5.600 1.400-1.200 2 5 2.400" fill="none" stroke="#7fdcf4" stroke-width=".9"/></g></svg><svg class="i" style="left:640px;top:170px" width="6" height="25" viewBox="0 0 6 25"><path d="M.4 .6L2.400 .2 3.800 .8 4.400 16 2.400 24.600 1 16z" fill="url(#gg)" filter="url(#b3)"/><path d="M1 1.500L1.400 17 2.400 24" fill="none" stroke="#8a8a8a" stroke-width=".8"/></svg><svg class="i" style="left:679px;top:174px" width="18" height="16" viewBox="0 0 18 16"><g filter="url(#b3)" fill="#e3301c"><path d="M1.400 4.600Q4 1.400 8 3.400 11.400 5 16 1.600L15.800 5.600Q11.600 8 8 6.200 4.400 4.600 1.400 4.600z"/><path d="M.8 9Q4 6 8 8 11.400 9.600 16.400 6.400L16 10.200Q11.600 12.400 8 10.600 4.400 9 .8 9z"/><path d="M1.400 13.400Q4 10.600 8 12.400 11.400 14 16 11L15.600 14.400Q11.600 16.600 8 14.800 4.400 13.400 1.400 13.400z"/></g><path d="M10 3.600Q12.600 4 15 2.600M10 8.400Q12.600 8.800 15 7.400M10 12.800Q12.600 13.200 15 11.800" fill="none" stroke="#ff9a78" stroke-width=".7"/></svg><svg class="i" style="left:696px;top:170px" width="6" height="25" viewBox="0 0 6 25"><path d="M.4 .6L2.400 .2 3.800 .8 4.400 16 2.400 24.600 1 16z" fill="url(#gg)" filter="url(#b3)"/><path d="M1 1.500L1.400 17 2.400 24" fill="none" stroke="#8a8a8a" stroke-width=".8"/></svg><svg class="i" style="left:737px;top:174px" width="17" height="16" viewBox="0 0 17 16"><g filter="url(#b5)"><path d="M1 3.600L12 7.400M.6 7.800L11 8.200M1.400 12.600L12 9" stroke="#7a7a7a" stroke-width="1.500" stroke-linecap="round"/><path d="M4 5.400L11.600 7.800M4 11L11.600 8.600" stroke="#b4b4b4" stroke-width="1"/><path d="M12.400 1.600l.8 4.600 3.400-1.600-2.400 3.400 2.600 2.400-3.600-.4-.6 4.400-1.400-4-3.400 1 2.400-3-2.200-3 3.400 1z" fill="#a4a4a4"/><circle cx="12.400" cy="8" r="2.600" fill="#fff"/></g></svg><svg class="i" style="left:752px;top:170px" width="6" height="25" viewBox="0 0 6 25"><path d="M.4 .6L2.400 .2 3.800 .8 4.400 16 2.400 24.600 1 16z" fill="url(#gg)" filter="url(#b3)"/><path d="M1 1.500L1.400 17 2.400 24" fill="none" stroke="#8a8a8a" stroke-width=".8"/></svg><svg class="i" style="left:794px;top:174px" width="16" height="17" viewBox="0 0 16 17"><g filter="url(#b5)"><path d="M1.600 2.400L13.400 1.400l1.200 13.200L3 15.800z" fill="url(#ex)"/><circle cx="8.600" cy="8.600" r="3" fill="#fffdf0"/></g></svg><svg class="i" style="left:808px;top:170px" width="6" height="25" viewBox="0 0 6 25"><path d="M.4 .6L2.400 .2 3.800 .8 4.400 16 2.400 24.600 1 16z" fill="url(#gg)" filter="url(#b3)"/><path d="M1 1.500L1.400 17 2.400 24" fill="none" stroke="#8a8a8a" stroke-width=".8"/></svg><svg class="i" style="left:623px;top:211px" width="27" height="26" viewBox="0 0 27 26"><g filter="url(#b8)"><path d="M2.400 3Q13.500 .4 24.600 3L24.400 15Q23.600 24 13.500 25.400 3.400 24 2.600 15z" fill="#86e8e2" opacity=".8"/></g><g filter="url(#b3)"><path d="M6 4.400Q13.500 2.800 21 4.400L20.900 14.400Q20.400 21.400 13.500 22.400 6.600 21.400 6.100 14.400z" fill="url(#df)"/><path d="M6 4.400Q13.500 2.800 21 4.400L20.900 6.200Q13.500 4.400 6.100 6.200z" fill="#eef8f6" opacity=".75"/><path d="M6.100 14.400Q6.600 21.400 13.500 22.400 20.400 21.400 20.900 14.400 19.600 19.600 13.500 20.400 7.400 19.600 6.100 14.400z" fill="#24504c" opacity=".55"/></g></svg><svg class="i" style="left:704px;top:212px" width="22" height="24" viewBox="0 0 22 24"><defs><linearGradient id="cpg" x1="0" y1="0" x2="1" y2=".45"><stop offset="0" stop-color="#3c2e1a"/><stop offset=".25" stop-color="#9a8462"/><stop offset=".4" stop-color="#f0e4cc"/><stop offset=".6" stop-color="#8c7452"/><stop offset="1" stop-color="#2e2212"/></linearGradient></defs><g filter="url(#b5)"><path d="M4 19.600l5 3.400 8-5-4.400-3z" fill="#8c8478" opacity=".55"/><path d="M8.400 1.400l7.200 3.200L8.400 20.400 1.600 16.200z" fill="url(#cpg)"/><path d="M8.400 1.400l7.200 3.200-.9 2-7.100-3.200z" fill="#c9b48e"/><path d="M2.400 14.400l6.800 4-.8 2-6.800-4.200z" fill="#33281a"/><path d="M12.400 8.400l7 2.400-2.400 7.400-7.200 2.200z" fill="#4a3a26"/><path d="M13.600 10.200l4.200 1.400-1.400 4.400-4.600 1.400z" fill="#f6f2ea"/><path d="M10 20.200l7-2 .4 1.400-6.400 2.200z" fill="#241a0e"/></g></svg><svg class="i" style="left:784px;top:213px" width="25" height="23" viewBox="0 0 25 23"><g filter="url(#b5)"><path d="M2.400 13.600l10.600 7 4.400-3L7 11z" fill="#211c12"/><path d="M1.600 8.600Q1.800 2.600 7.600 1.200L12 1.600 21.800 6.800Q24.600 11 21.400 16L17 20 3.600 12.400z" fill="url(#brs)"/><path d="M3.400 7.600Q4.400 3.400 8.600 2.800L17.600 7.200 14.400 11.400 4 8.800z" fill="#b8a874" opacity=".85"/><path d="M5 10.400l9.400 3.600M8 4.400l8.400 4.200" stroke="#3c3420" stroke-width=".8" opacity=".7"/><ellipse cx="18.600" cy="12.800" rx="3.600" ry="5.400" fill="#f4f4f0" transform="rotate(-28 18.600 12.800)"/><ellipse cx="19" cy="13.200" rx="1.700" ry="2.800" fill="#8c8a80" transform="rotate(-28 19 13.200)"/></g></svg><svg class="i" style="left:622px;top:254px" width="32" height="24" viewBox="0 0 32 24"><g filter="url(#b5)"><path d="M22 10.400l9 .4-4.600 4.600-6-.8z" fill="#c2c2c2" opacity=".75"/><path d="M1.600 7.600L16 3.200l1.100 4.400L2.800 12.200z" fill="url(#slv)"/><path d="M1.800 7.800L15.800 3.600l.4 1.400L2.300 9.400z" fill="#fdfdfd"/><path d="M2.500 10.800L16.700 6.400l.4 1.300L2.800 12.200z" fill="#2c2e30"/><path d="M12.800 4.600L15 2.400 21 2 25 4.400 24.600 8 20 9.800 14.600 9z" fill="#3a3c3e"/><path d="M16.600 3.200L21 2.800 23.400 4.400 19.600 5.800z" fill="#f2f4f4"/><path d="M16 9L21 9.400 22 15.400 16.400 15.800z" fill="#6c645a"/><path d="M17 9.400l1.800.2.600 6-2 .2z" fill="#b4aea4"/><path d="M11 16.800L17 14.400 22.400 16 22 20.400 15.400 23 10.800 20.200z" fill="#aeb2b6"/><path d="M12 16.900L17 15.200 21.200 16.400 16 18.600z" fill="#f6f8f8"/><path d="M10.800 20.200L15.400 23 22 20.400M15.600 18.800L15.400 23" fill="none" stroke="#2a2c2e" stroke-width="1"/></g></svg><svg class="i" style="left:627px;top:281px" width="24" height="19" viewBox="0 0 24 19"><defs><linearGradient id="msl" x1="0" x2="1"><stop offset="0" stop-color="#dcebe8" stop-opacity="0"/><stop offset=".6" stop-color="#dcebe8"/><stop offset="1" stop-color="#c4d8d4"/></linearGradient><linearGradient id="msd" x1="0" x2="1"><stop offset="0" stop-color="#101010" stop-opacity="0"/><stop offset=".55" stop-color="#101010" stop-opacity=".85"/><stop offset="1" stop-color="#0a0a0a"/></linearGradient></defs><g filter="url(#b5)"><rect x="2" y="1.800" width="14.600" height="2.200" rx="1" fill="url(#msl)"/><rect x="2" y="3.600" width="15" height="2.400" rx="1.200" fill="url(#msd)"/><rect x="8" y="6.800" width="13.400" height="2.400" rx="1" fill="url(#msl)"/><rect x="8" y="8.800" width="13.800" height="2.800" rx="1.400" fill="url(#msd)"/><rect x="1.600" y="13" width="10.600" height="2.400" rx="1" fill="url(#msl)"/><rect x="1.600" y="15" width="11" height="2.600" rx="1.300" fill="url(#msd)"/></g></svg><svg class="i" style="left:702px;top:254px" width="25" height="25" viewBox="0 0 25 25"><g filter="url(#b5)"><ellipse cx="12.600" cy="13.400" rx="10.600" ry="10.200" fill="#a4acb0"/><circle cx="12.400" cy="12.400" r="10.600" fill="#e6eff3"/><path d="M2.400 9Q5 2.400 12.400 1.800 16 2 18.600 4L12 13z" fill="#d6e7ee"/><path d="M3 15.600Q5 22.400 12.400 22.800 19.600 22.400 21.800 15.600 18 19.600 12.400 19.600 6.600 19.600 3 15.600z" fill="#fdfefe"/><path d="M11.400 14L19.800 3.800l1 .8L12.800 15z" fill="#38606a"/></g></svg><svg class="i" style="left:789px;top:252.5px" width="29" height="29" viewBox="0 0 29 29"><g filter="url(#b5)"><path d="M14.500 2.400v24.400M2.400 14.500h24.400" stroke="#9c9080" stroke-width="1.400"/><circle cx="14.500" cy="14.500" r="10" fill="url(#mt)"/><circle cx="14.500" cy="14.500" r="9.600" fill="none" stroke="#8c7c66" stroke-width="1.200"/><circle cx="14.500" cy="14.500" r="5.600" fill="none" stroke="#a09280" stroke-width=".8"/><path d="M14.500 6v17M6 14.500h17" stroke="#a09280" stroke-width=".8"/><path d="M6.400 19.400Q10 25.400 17 24.200 22 22.600 24 17.600" fill="none" stroke="#4a3e30" stroke-width="1.600"/><circle cx="14.500" cy="14.500" r="1.600" fill="#f4eee0"/></g></svg><svg class="i" style="left:703px;top:280px" width="23" height="21" viewBox="0 0 23 21"><g filter="url(#b5)"><ellipse cx="17.600" cy="13.400" rx="3.200" ry="5.200" fill="#f2f2ee" stroke="#b4b0a8" stroke-width=".7" transform="rotate(-22 17.600 13.400)"/><path d="M8 11L6.400 1.400 12 2.400 17 5.400 19.600 9.600 16 13.400z" fill="#c9ac7e"/><path d="M8 11L6.400 1.400 9.400 1.800z" fill="#8a6a3e"/><path d="M8 11L17 5.400 19.600 9.600z" fill="#e4d2b0"/><path d="M8 11L6.400 1.400M8 11L12 2.400M8 11L17 5.400M8 11L19.600 9.600M8 11L16 13.400" stroke="#54381a" stroke-width=".9"/><path d="M8 11L1 10.400 2.400 12.600zM8 11L3 14.600 5 15.400z" fill="#6e4e28"/><path d="M8 11L4.400 18.600M8 11l-.6 8.600M8 11l3 6.400" stroke="#6a5030" stroke-width="1.100"/><circle cx="8" cy="11" r="1.600" fill="#3a2814"/></g></svg><svg class="i" style="left:793px;top:280px" width="22" height="22" viewBox="0 0 22 22"><g filter="url(#b3)" fill="none"><circle cx="11" cy="10.800" r="9.400" fill="#f8f9fa" stroke="#8a9096" stroke-width="1.100"/><circle cx="11" cy="10.800" r="7.200" stroke="#d4d8dc" stroke-width=".8"/><circle cx="11" cy="10.800" r="4.700" stroke="#2c3642" stroke-width="1.900"/><circle cx="11" cy="10.800" r="2" fill="#9aa6b4" stroke="none"/><circle cx="11.400" cy="10.400" r=".9" fill="#fff" stroke="none"/></g></svg><svg class="i" style="left:625px;top:322px" width="23" height="20" viewBox="0 0 23 20"><g filter="url(#b5)"><path d="M2 7.400L8.400 2.400 14 3.400 9.600 9.400 5.600 16z" fill="#7a5c40"/><path d="M3.600 7L9 3l5.400.8L20.400 12 16.600 17.400 9 17.400z" fill="#efe6d8"/><path d="M3.600 7L9 3l5.400.8L9.600 8z" fill="#fbf8f2"/><path d="M10.400 9.400L15 6.400l5.400 5.600-3.800 5.400-6.200-.4z" fill="#4cd2d8"/><path d="M12.600 10.400l2.400-1.600 3 3.200-2.200 3z" fill="#d8fcfc"/><path d="M3.600 7l6 10.400-2 .2L2 8.600z" fill="#5c4632"/></g></svg><svg class="i" style="left:703px;top:319px" width="30" height="26" viewBox="0 0 30 26"><g filter="url(#b5)"><path d="M14.200 1.400v3.400M12 1.600h4.400" stroke="#4a6e92" stroke-width="1.500"/><path d="M19.600 4.600l1.400-1.400" stroke="#4a6e92" stroke-width="1.300"/><circle cx="14.200" cy="11.400" r="7" fill="url(#sw)"/><circle cx="14.200" cy="11.400" r="6.600" fill="none" stroke="#3a6c9c" stroke-width="1.300"/><path d="M14.200 11.400V7.400" stroke="#1e4c78" stroke-width="1.200"/><path d="M2 24.600L7.400 17.400 9.600 18.400 5 25zM8 25l3.400-6.600 2.200.6L10.800 25zM13.600 25l1.400-5.800h2.200L16.400 25zM19 25l.2-5.600 2.200-.6 .8 6.200zM24 24l-2.600-5.600 2-1.200L28 22.600z" fill="#5c86ae"/></g></svg><svg class="i" style="left:772px;top:319px" width="23" height="26" viewBox="0 0 23 26"><g filter="url(#b5)"><ellipse cx="9" cy="10" rx="7" ry="8.600" fill="#9cecdf" transform="rotate(-22 9 10)"/><ellipse cx="9.400" cy="10.400" rx="5" ry="6.600" fill="none" stroke="#4cbcae" stroke-width="1.400" transform="rotate(-22 9.400 10.400)"/><ellipse cx="11" cy="12" rx="5.400" ry="7" fill="#7ad6c8" transform="rotate(-22 11 12)"/><ellipse cx="13.400" cy="15" rx="6.200" ry="7.400" fill="#8a6a56" transform="rotate(-22 13.400 15)"/><ellipse cx="14" cy="15.400" rx="4.400" ry="5.600" fill="#ead8cc" transform="rotate(-22 14 15.400)"/><ellipse cx="14.600" cy="16" rx="2.200" ry="3.200" fill="none" stroke="#7a4c3a" stroke-width="1.300" transform="rotate(-22 14.600 16)"/><path d="M9 21.600l4 3 3.400-1.200" fill="none" stroke="#3c2c20" stroke-width="1.300"/></g></svg>
<span class="t" style="left:29.3px;top:11px;transform:scaleX(0.971);-webkit-text-stroke:0.2px #000;text-shadow:0 0 5px rgba(255,255,255,.9),0 0 9px rgba(255,255,255,.8),0 0 14px rgba(255,255,255,.6);">Setups for Thorax Cruiser</span>
<span class="t" style="left:21.2px;top:29px;transform:scaleX(0.884);">Current Setup</span>
<span class="t" style="left:46.9px;top:47px;transform:scaleX(0.887);">Nano Railrax</span>
<span class="t" style="left:360.4px;top:29px;transform:scaleX(0.874);">Character</span>
<span class="t" style="left:365.4px;top:47px;transform:scaleX(0.924);">Dyaven</span>
<span class="t" style="left:20.4px;top:87px;transform:scaleX(0.906);">Modules</span>
<span class="t" style="left:438.9px;top:87px;transform:scaleX(0.859);">Optimal</span>
<span class="t" style="left:488.9px;top:87px;transform:scaleX(0.872);">Charges</span>
<span class="t" style="left:26.8px;top:109px;color:#1e3287;transform:scaleX(0.993);-webkit-text-stroke:0;">Low slots</span>
<span class="t" style="left:26.8px;top:223px;color:#1e3287;transform:scaleX(1.007);-webkit-text-stroke:0;">Med slots</span>
<span class="t" style="left:26.8px;top:301px;color:#1e3287;transform:scaleX(1.020);-webkit-text-stroke:0;">High slots</span>
<span class="t" style="left:26.8px;top:415px;color:#1e3287;transform:scaleX(0.971);-webkit-text-stroke:0;">Rig slots</span>
<span class="t" style="left:56.1px;top:129px;transform:scaleX(0.873);">Damage Control II</span>
<span class="t" style="left:329.8px;top:129px;transform:scaleX(0.987);">30</span>
<span class="t" style="left:361.4px;top:129px;transform:scaleX(0.900);">1</span>
<span class="t" style="left:402.7px;top:129px;transform:scaleX(1.093);">0</span>
<span class="t" style="left:56.1px;top:147px;transform:scaleX(0.887);">Nanofiber Internal Structure II</span>
<span class="t" style="left:329.7px;top:147px;transform:scaleX(1.093);">0</span>
<span class="t" style="left:362.2px;top:147px;transform:scaleX(1.093);">0</span>
<span class="t" style="left:56.1px;top:165px;transform:scaleX(0.874);">Magnetic Field Stabilizer II</span>
<span class="t" style="left:329.8px;top:165px;transform:scaleX(0.987);">30</span>
<span class="t" style="left:361.4px;top:165px;transform:scaleX(0.900);">1</span>
<span class="t" style="left:56.1px;top:183px;transform:scaleX(0.874);">Magnetic Field Stabilizer II</span>
<span class="t" style="left:329.8px;top:183px;transform:scaleX(0.987);">30</span>
<span class="t" style="left:361.4px;top:183px;transform:scaleX(0.900);">1</span>
<span class="t" style="left:56.1px;top:201px;transform:scaleX(0.874);">Magnetic Field Stabilizer II</span>
<span class="t" style="left:329.8px;top:201px;transform:scaleX(0.987);">30</span>
<span class="t" style="left:361.4px;top:201px;transform:scaleX(0.900);">1</span>
<span class="t" style="left:56.1px;top:243px;transform:scaleX(0.900);">10MN MicroWarpdrive I</span>
<span class="t" style="left:329.8px;top:243px;transform:scaleX(0.987);">50</span>
<span class="t" style="left:362.3px;top:243px;transform:scaleX(0.956);">150</span>
<span class="t" style="left:402.9px;top:243px;transform:scaleX(0.898);">-15.3</span>
<span class="t" style="left:56.1px;top:261px;transform:scaleX(0.887);">Warp Disruptor II</span>
<span class="t" style="left:329.8px;top:261px;transform:scaleX(0.987);">44</span>
<span class="t" style="left:361.4px;top:261px;transform:scaleX(0.900);">1</span>
<span class="t" style="left:402.9px;top:261px;transform:scaleX(0.898);">-4.5</span>
<span class="t" style="left:438.8px;top:261px;transform:scaleX(0.987);">24</span>
<span class="t" style="left:56.1px;top:279px;transform:scaleX(0.878);">Large Shield Extender II</span>
<span class="t" style="left:329.8px;top:279px;transform:scaleX(0.987);">46</span>
<span class="t" style="left:362.3px;top:279px;transform:scaleX(0.956);">132</span>
<span class="t" style="left:56.1px;top:321px;transform:scaleX(0.860);">Dual 150mm Compressed Coil Gun I</span>
<span class="t" style="left:329.8px;top:321px;transform:scaleX(0.948);">22.5</span>
<span class="t" style="left:362.3px;top:321px;transform:scaleX(0.970);">76.8</span>
<span class="t" style="left:402.9px;top:321px;transform:scaleX(0.898);">-1.2</span>
<span class="t" style="left:438.9px;top:321px;transform:scaleX(0.907);">19+6.6</span>
<span class="t" style="left:488.9px;top:321px;transform:scaleX(0.868);">Caldari Navy Iridi...</span>
<span class="t" style="left:56.1px;top:339px;transform:scaleX(0.860);">Dual 150mm Compressed Coil Gun I</span>
<span class="t" style="left:329.8px;top:339px;transform:scaleX(0.948);">22.5</span>
<span class="t" style="left:362.3px;top:339px;transform:scaleX(0.970);">76.8</span>
<span class="t" style="left:402.9px;top:339px;transform:scaleX(0.898);">-1.2</span>
<span class="t" style="left:438.9px;top:339px;transform:scaleX(0.907);">19+6.6</span>
<span class="t" style="left:488.9px;top:339px;transform:scaleX(0.868);">Caldari Navy Iridi...</span>
<span class="t" style="left:56.1px;top:357px;transform:scaleX(0.860);">Dual 150mm Compressed Coil Gun I</span>
<span class="t" style="left:329.8px;top:357px;transform:scaleX(0.948);">22.5</span>
<span class="t" style="left:362.3px;top:357px;transform:scaleX(0.970);">76.8</span>
<span class="t" style="left:402.9px;top:357px;transform:scaleX(0.898);">-1.2</span>
<span class="t" style="left:438.9px;top:357px;transform:scaleX(0.907);">19+6.6</span>
<span class="t" style="left:488.9px;top:357px;transform:scaleX(0.868);">Caldari Navy Iridi...</span>
<span class="t" style="left:56.1px;top:375px;transform:scaleX(0.860);">Dual 150mm Compressed Coil Gun I</span>
<span class="t" style="left:329.8px;top:375px;transform:scaleX(0.948);">22.5</span>
<span class="t" style="left:362.3px;top:375px;transform:scaleX(0.970);">76.8</span>
<span class="t" style="left:402.9px;top:375px;transform:scaleX(0.898);">-1.2</span>
<span class="t" style="left:438.9px;top:375px;transform:scaleX(0.907);">19+6.6</span>
<span class="t" style="left:488.9px;top:375px;transform:scaleX(0.868);">Caldari Navy Iridi...</span>
<span class="t" style="left:56.1px;top:393px;transform:scaleX(0.860);">Dual 150mm Compressed Coil Gun I</span>
<span class="t" style="left:329.8px;top:393px;transform:scaleX(0.948);">22.5</span>
<span class="t" style="left:362.3px;top:393px;transform:scaleX(0.970);">76.8</span>
<span class="t" style="left:402.9px;top:393px;transform:scaleX(0.898);">-1.2</span>
<span class="t" style="left:438.9px;top:393px;transform:scaleX(0.907);">19+6.6</span>
<span class="t" style="left:488.9px;top:393px;transform:scaleX(0.868);">Caldari Navy Iridi...</span>
<span class="t" style="left:56.1px;top:435px;transform:scaleX(0.894);">Rig Slot</span>
<span class="t" style="left:56.1px;top:453px;transform:scaleX(0.894);">Rig Slot</span>
<span class="t" style="left:56.1px;top:471px;transform:scaleX(0.894);">Rig Slot</span>
<span class="t" style="left:36.9px;top:651px;transform:scaleX(0.882);">Hammerhead II x5</span>
<span class="t" style="left:63.8px;top:688px;color:#f6f6f6;transform:scaleX(0.936);-webkit-text-stroke:0;">Active drones: 5 / 5</span>
<span class="t" style="left:256.9px;top:688px;transform:scaleX(0.884);">Boosters and Implants</span>
<span class="t" style="left:465.9px;top:688px;transform:scaleX(0.904);">Projected effects</span>
<span class="t" style="left:619.1px;top:29px;transform:scaleX(0.892);">Ship Resources</span>
<span class="t" style="left:646.9px;top:45px;transform:scaleX(0.963);">: 0</span>
<span class="t" style="left:646.9px;top:69px;transform:scaleX(0.963);">: 0</span>
<span class="t" style="left:647.0px;top:93px;transform:scaleX(0.921);">: 400</span>
<span class="t" style="left:714.3px;top:51px;transform:scaleX(0.951);">372.5 / 375</span>
<span class="t" style="left:714.3px;top:75px;transform:scaleX(0.955);">671 / 1025</span>
<span class="t" style="left:714.3px;top:99px;transform:scaleX(0.986);">50 / 50</span>
<span class="t" style="left:619.1px;top:119px;transform:scaleX(0.868);">Ship Parameters</span>
<span class="t" style="left:627.8px;top:131px;transform:scaleX(0.905);">Hitpoints (Effective HP: 16,111)</span>
<span class="t" style="left:654.4px;top:149px;transform:scaleX(0.901);">: 4979</span>
<span class="t" style="left:730.1px;top:149px;transform:scaleX(0.870);">: 2051</span>
<span class="t" style="left:806.4px;top:149px;transform:scaleX(0.914);">: 1875</span>
<span class="t" style="left:648.0px;top:168px;transform:scaleX(0.865);">12.5%</span>
<span class="t" style="left:648.0px;top:180px;transform:scaleX(0.865);">57.5%</span>
<span class="t" style="left:704.1px;top:168px;transform:scaleX(0.832);">30%</span>
<span class="t" style="left:704.1px;top:180px;transform:scaleX(0.865);">44.8%</span>
<span class="t" style="left:760.4px;top:168px;transform:scaleX(0.853);">47.5%</span>
<span class="t" style="left:760.4px;top:180px;transform:scaleX(0.853);">44.8%</span>
<span class="t" style="left:816.1px;top:168px;transform:scaleX(0.862);">56.3%</span>
<span class="t" style="left:816.1px;top:180px;transform:scaleX(0.862);">23.5%</span>
<span class="t" style="left:627.7px;top:200px;transform:scaleX(0.933);">Defence</span>
<span class="t" style="left:652.4px;top:211px;transform:scaleX(0.904);">: 20</span>
<span class="t" style="left:652.4px;top:223px;transform:scaleX(0.904);">: 20</span>
<span class="t" style="left:706.8px;top:200px;transform:scaleX(0.871);">Capacitor (Lasts: 1m 35s)</span>
<span class="t" style="left:730.8px;top:216px;transform:scaleX(0.932);">: 1719</span>
<span class="t" style="left:811.8px;top:211px;transform:scaleX(0.885);">- 25.9</span>
<span class="t" style="left:811.4px;top:223px;transform:scaleX(0.908);">+10.9</span>
<span class="t" style="left:627.8px;top:243px;transform:scaleX(0.874);">Firepower</span>
<span class="t" style="left:652.4px;top:259px;transform:scaleX(0.902);">: 257</span>
<span class="t" style="left:652.4px;top:283px;transform:scaleX(0.902);">: 299</span>
<span class="t" style="left:707.4px;top:243px;transform:scaleX(0.913);">Targeting</span>
<span class="t" style="left:730.9px;top:259px;transform:scaleX(0.903);">: 57.75 km</span>
<span class="t" style="left:730.9px;top:283px;transform:scaleX(0.875);">: 247.5 mm</span>
<span class="t" style="left:819.0px;top:259px;transform:scaleX(0.922);">: 4</span>
<span class="t" style="left:819.0px;top:283px;transform:scaleX(0.925);">: 15</span>
<span class="t" style="left:627.8px;top:308px;transform:scaleX(0.876);">Mobility</span>
<span class="t" style="left:649.9px;top:325px;transform:scaleX(0.921);">: 1354 m/s</span>
<span class="t" style="left:733.0px;top:325px;transform:scaleX(0.921);">: 5.3 s</span>
<span class="t" style="left:794.0px;top:325px;transform:scaleX(0.951);">: 3 au/s</span>
<span class="t" style="left:619.1px;top:359px;transform:scaleX(0.884);">Signature: 990 m2</span>
<span class="t" style="left:739.1px;top:359px;transform:scaleX(0.879);">Cargohold: 265 m3</span>
<span class="t" style="left:619.1px;top:375px;transform:scaleX(0.905);">Dronebay: 50 / 50 m3</span>
<span class="t" style="left:619.1px;top:391px;transform:scaleX(0.896);">Price: 27,674,918 isk</span>
<span class="t" style="left:619.1px;top:407px;transform:scaleX(0.873);">Fleet Commander - right click to set</span>
<span class="t" style="left:619.1px;top:423px;transform:scaleX(0.881);">Wing Commander - right click to set</span>
<span class="t" style="left:619.1px;top:439px;transform:scaleX(0.878);">Squad Commander - right click to set</span>
</body></html>
